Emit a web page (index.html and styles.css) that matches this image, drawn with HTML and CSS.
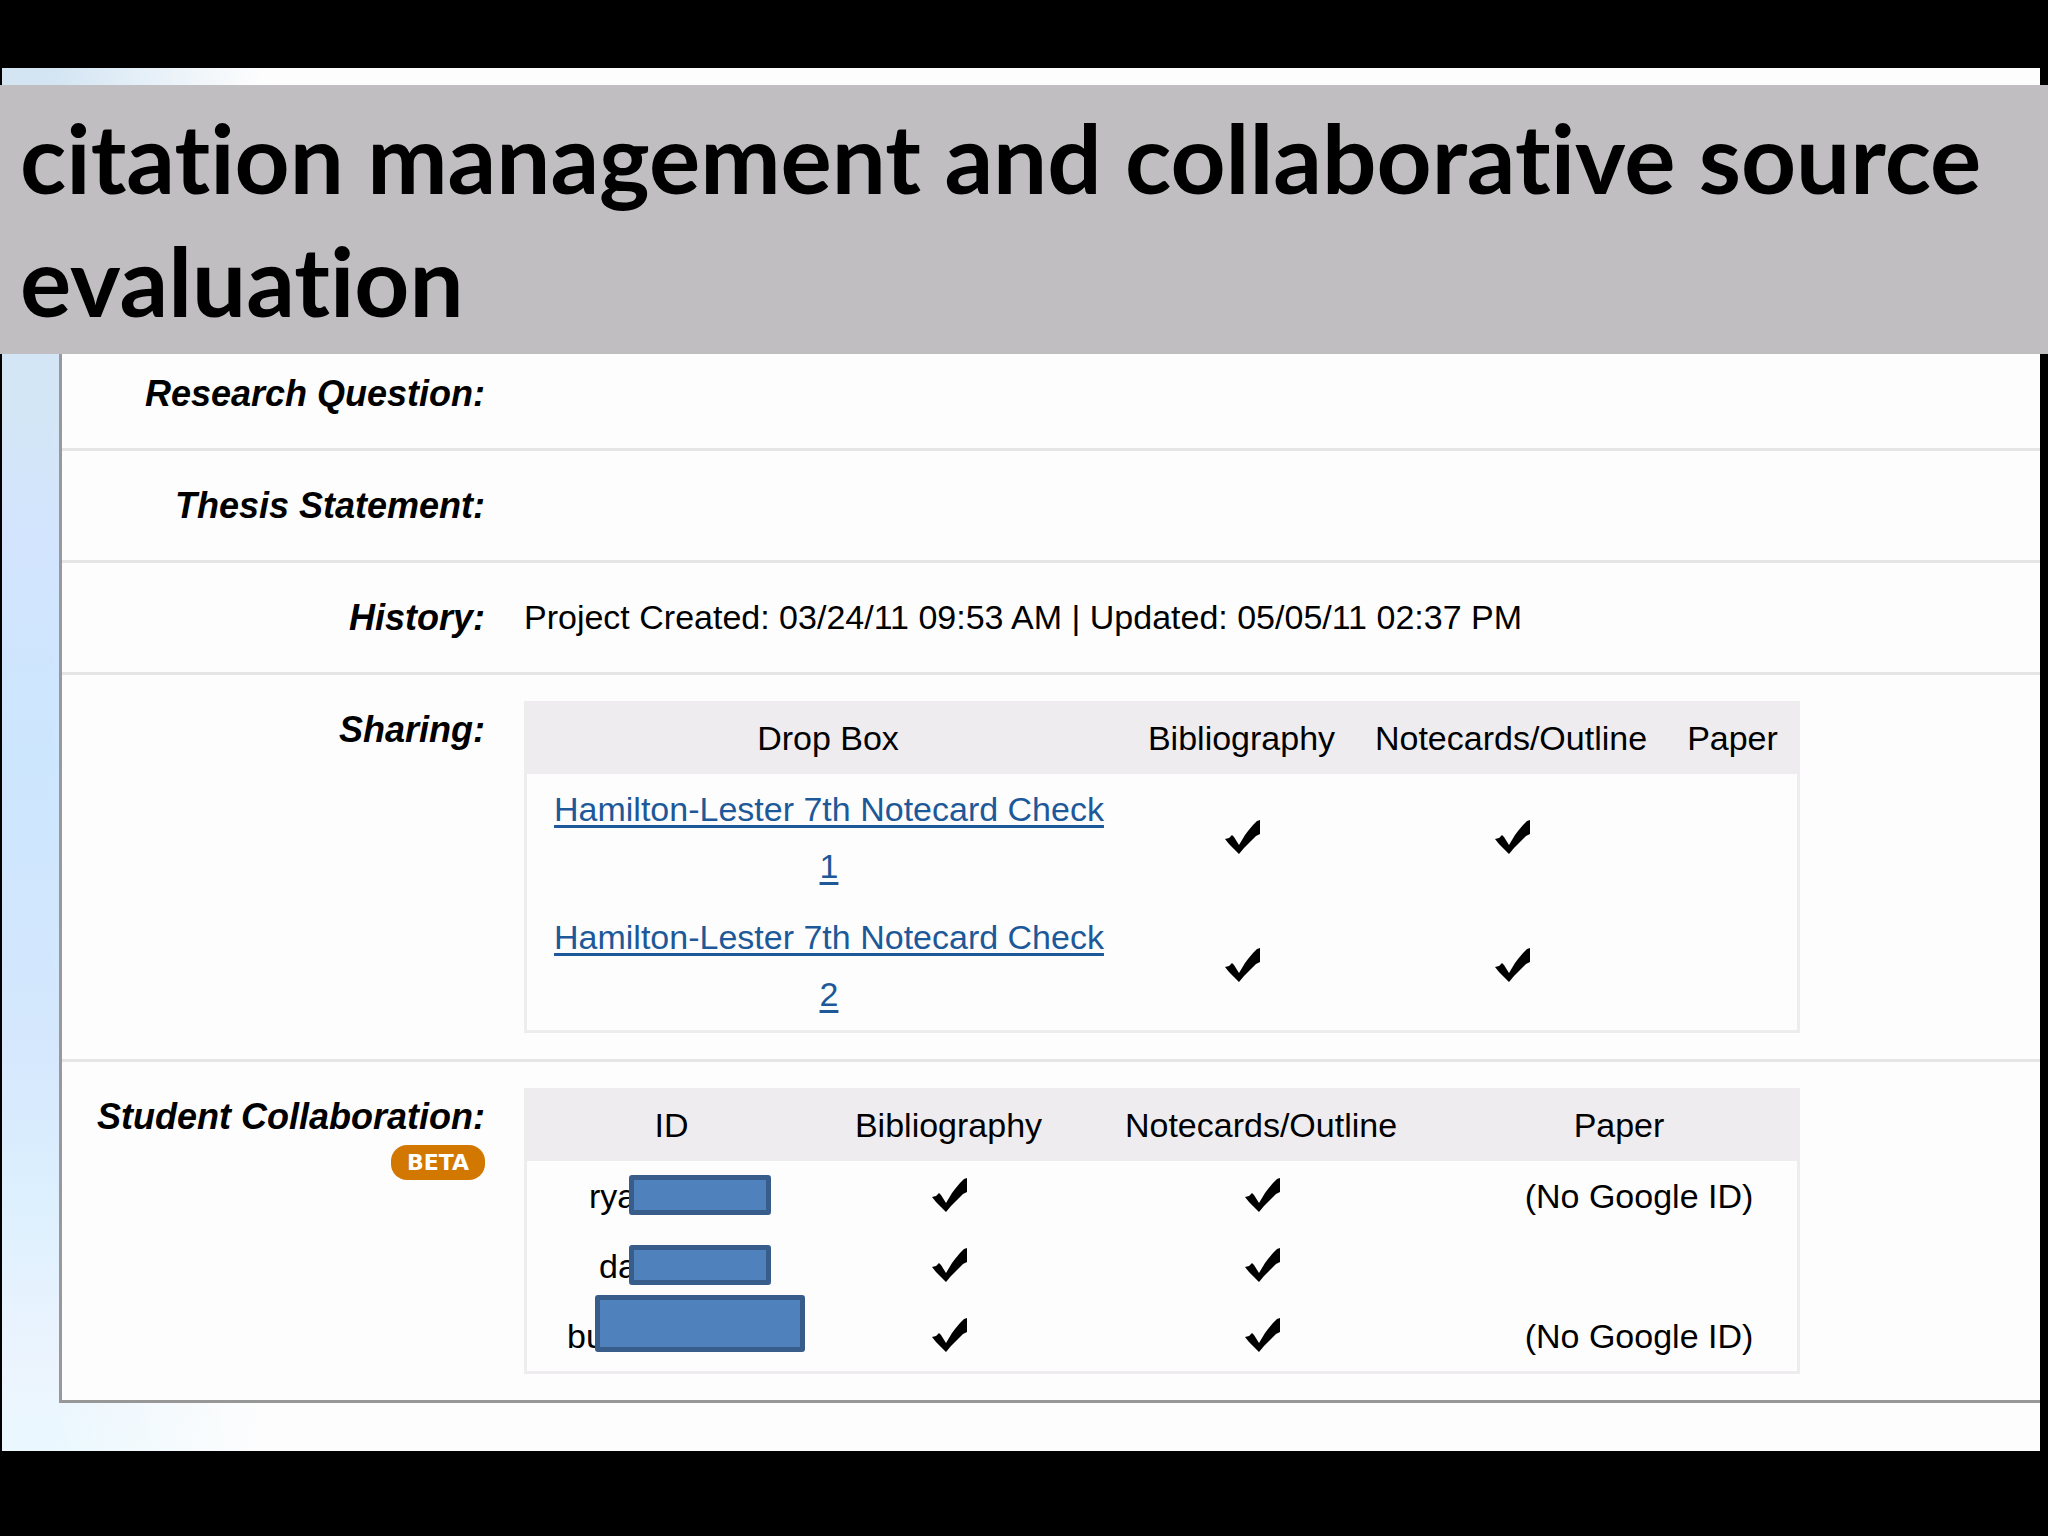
FILE: index.html
```html
<!DOCTYPE html>
<html lang="en">

<head>
    <meta charset="UTF-8">
    <meta name="viewport" content="width=device-width, initial-scale=1.0">
    <title>citation management and collaborative source evaluation</title>
    <link rel="stylesheet" href="styles.css">
</head>

<body>
    <!-- Check mark shared by both tables -->
    <svg class="sprite" aria-hidden="true">
        <symbol id="check" viewBox="0 0 35 34">
            <path d="M0 19 L4 18 L7 15 L9 17 L14 25 L20 15 L23 11 L28 5 L32 1 L35 0 L35 14 L31 16 L27 20 L19 28 L14 34 L9 29 L4 24 Z" />
        </symbol>
    </svg>

    <main class="slide">
        <!-- Slide Title -->
        <h1 class="slide-title">citation management and collaborative source evaluation</h1>

        <!-- Project Details -->
        <div class="panel">
            <section class="row">
                <h2 class="label">Research Question:</h2>
            </section>

            <section class="row">
                <h2 class="label">Thesis Statement:</h2>
            </section>

            <section class="row">
                <h2 class="label">History:</h2>
                <p>Project Created: 03/24/11 09:53 AM | Updated: 05/05/11 02:37 PM</p>
            </section>

            <!-- Sharing -->
            <section class="row">
                <h2 class="label">Sharing:</h2>
                <table class="data-table sharing">
                    <thead>
                        <tr>
                            <th class="col-box">Drop Box</th>
                            <th class="col-bib">Bibliography</th>
                            <th class="col-notes">Notecards/Outline</th>
                            <th>Paper</th>
                        </tr>
                    </thead>
                    <tbody>
                        <tr>
                            <td><a href="#">Hamilton-Lester 7th Notecard Check 1</a></td>
                            <td><svg class="check" role="img" aria-label="Yes"><use href="#check" /></svg></td>
                            <td><svg class="check" role="img" aria-label="Yes"><use href="#check" /></svg></td>
                            <td></td>
                        </tr>
                        <tr>
                            <td><a href="#">Hamilton-Lester 7th Notecard Check 2</a></td>
                            <td><svg class="check" role="img" aria-label="Yes"><use href="#check" /></svg></td>
                            <td><svg class="check" role="img" aria-label="Yes"><use href="#check" /></svg></td>
                            <td></td>
                        </tr>
                    </tbody>
                </table>
            </section>

            <!-- Student Collaboration -->
            <section class="row">
                <div class="label-group">
                    <h2 class="label">Student Collaboration:</h2>
                    <span class="badge">BETA</span>
                </div>
                <table class="data-table students">
                    <thead>
                        <tr>
                            <th class="col-id">ID</th>
                            <th class="col-bib">Bibliography</th>
                            <th class="col-notes">Notecards/Outline</th>
                            <th>Paper</th>
                        </tr>
                    </thead>
                    <tbody>
                        <tr>
                            <td><span class="student">rya<span class="cover"></span></span></td>
                            <td><svg class="check" role="img" aria-label="Yes"><use href="#check" /></svg></td>
                            <td><svg class="check" role="img" aria-label="Yes"><use href="#check" /></svg></td>
                            <td class="note">(No Google ID)</td>
                        </tr>
                        <tr>
                            <td><span class="student short">da<span class="initial">p</span><span class="cover"></span></span></td>
                            <td><svg class="check" role="img" aria-label="Yes"><use href="#check" /></svg></td>
                            <td><svg class="check" role="img" aria-label="Yes"><use href="#check" /></svg></td>
                            <td></td>
                        </tr>
                        <tr>
                            <td><span class="student long">bu<span class="cover"></span></span></td>
                            <td><svg class="check" role="img" aria-label="Yes"><use href="#check" /></svg></td>
                            <td><svg class="check" role="img" aria-label="Yes"><use href="#check" /></svg></td>
                            <td class="note">(No Google ID)</td>
                        </tr>
                    </tbody>
                </table>
            </section>
        </div>
    </main>
</body>

</html>
```

FILE: styles.css
```css
/* General Styles */
* {
    margin: 0;
    padding: 0;
    box-sizing: border-box;
}

body {
    padding: 68px 8px 85px 2px;
    background-color: #000;
    color: #000;
    font-family: "Liberation Sans", Arial, sans-serif;
    font-size: 34px;
    line-height: 57px;
}

.sprite {
    display: none;
}

/* Slide */
.slide {
    padding: 17px 0 48px;
    background:
        linear-gradient(to right, rgba(253, 253, 253, 0) 50px, #fdfdfd 260px),
        linear-gradient(#d3e5f3, #d3e6f6 25%, #d2e4fe 35%, #cce6fe 50%, #d4e7fd 70%, #ddf0fe 82%, #ecf4fe 94%, #eaf8fe);
}

/* Title band runs past the slide on both sides */
.slide-title {
    margin: 0 -8px 0 -2px;
    padding: 10px 20px 13px;
    background-color: #c0bec1;
    font-family: Lato, Calibri, sans-serif;
    font-size: 96px;
    font-weight: 700;
    font-variant-ligatures: none;
    line-height: 123px;
}

/* Project Details */
.panel {
    margin-left: 57px;
    border-left: 3px solid #97999d;
    border-bottom: 3px solid #979797;
    background-color: #fdfdfd;
}

.row {
    display: grid;
    grid-template-columns: 423px 1fr;
    column-gap: 39px;
    padding: 26px 0;
    border-bottom: 3px solid #e5e5e5;
}

.row:first-child {
    padding-top: 11px;
}

.row:last-child {
    border-bottom: none;
}

.label {
    font-size: 36px;
    font-style: italic;
    font-weight: bold;
    line-height: 57px;
    text-align: right;
}

.label-group {
    display: flex;
    flex-direction: column;
    align-items: flex-end;
}

.badge {
    padding: 0 16px;
    border-radius: 16px;
    background-color: #d27800;
    color: #fff;
    font-family: "DejaVu Sans", Verdana, sans-serif;
    font-size: 22px;
    font-weight: bold;
    line-height: 35px;
}

/* Tables */
.data-table {
    width: 1276px;
    max-width: 100%;
    border: 3px solid #eeecef;
    border-spacing: 0;
    table-layout: fixed;
    text-align: center;
}

.data-table th {
    padding: 6px 0 7px 2px;
    background-color: #eeecef;
    font-weight: normal;
}

.data-table td {
    padding: 7px 16px 7px 20px;
    vertical-align: middle;
}

.data-table a {
    color: #1d5999;
    text-decoration-thickness: 3px;
    text-underline-offset: 4px;
}

.sharing .col-box {
    width: 600px;
}

.sharing .col-bib {
    width: 227px;
}

.sharing .col-notes {
    width: 312px;
}

.students .col-id {
    width: 287px;
}

.students .col-bib {
    width: 267px;
}

.students .col-notes {
    width: 358px;
}

.students td {
    padding: 7px 0 6px 4px;
}

.students .note {
    padding-left: 42px;
}

.check {
    display: block;
    width: 35px;
    height: 34px;
    margin: 0 auto 3px;
}

/* Student names, partly hidden by a block */
.student {
    display: block;
    position: relative;
    padding-left: 58px;
    text-align: left;
}

.student.short {
    padding-left: 68px;
}

.student.long {
    padding-left: 36px;
}

.initial {
    margin-left: 36px;
}

.cover {
    position: absolute;
    top: 7px;
    left: 98px;
    width: 142px;
    height: 40px;
    border: 5px solid #385d8a;
    border-radius: 3px;
    background-color: #4f81bd;
}

.long .cover {
    top: -13px;
    left: 64px;
    width: 210px;
    height: 57px;
}
```
